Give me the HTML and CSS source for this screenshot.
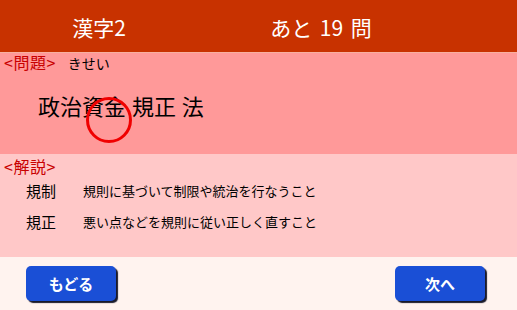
FILE: index.html
```html
<!DOCTYPE html>
<html lang="ja">
<head>
<meta charset="utf-8">
<link rel="stylesheet" href="styles.css">
</head>
<body>
<div class="app">
  <header class="header">
    <div class="title">漢字2</div>
    <div class="remain">あと 19 問</div>
  </header>
  <section class="question">
    <div class="qline"><span class="label">&lt;問題&gt;</span><span class="reading">きせい</span></div>
    <div class="qtext">政治資金 規正 法</div>
    <div class="mark"></div>
  </section>
  <section class="explain">
    <div class="label">&lt;解説&gt;</div>
    <div class="row"><span class="term">規制</span><span class="def">規則に基づいて制限や統治を行なうこと</span></div>
    <div class="row"><span class="term">規正</span><span class="def">悪い点などを規則に従い正しく直すこと</span></div>
  </section>
  <footer class="footer">
    <button class="btn">もどる</button>
    <button class="btn">次へ</button>
  </footer>
</div>
</body>
</html>
```
FILE: styles.css
```css
html, body {
  margin: 0;
  padding: 0;
}
body {
  width: 517px;
  height: 310px;
  overflow: hidden;
  font-family: "Noto Sans CJK JP", "Noto Sans", sans-serif;
  background: #fff3ef;
}
.app {
  display: flex;
  flex-direction: column;
  height: 310px;
}
.header {
  background: #c83200;
  border-bottom: 1px solid #f7b0a0;
  display: grid;
  grid-template-columns: 198px 246px;
  align-items: center;
  color: #fff;
  font-size: 21px;
  line-height: 26px;
  padding-top: 2px;
  box-sizing: border-box;
  height: 53px;
}
.title, .remain {
  text-align: center;
}
.remain {
  word-spacing: 3px;
}
.question {
  position: relative;
  height: 101px;
  background: #ff9999;
  box-sizing: border-box;
  padding-top: 0;
}
.qline {
  display: flex;
  align-items: baseline;
  line-height: 18px;
}
.label {
  color: #c80000;
  font-size: 16px;
  line-height: 18px;
  padding-left: 4px;
  letter-spacing: 0.5px;
}
.reading {
  font-size: 14px;
  margin-left: 12px;
  color: #000;
}
.qtext {
  margin-top: 19px;
  padding-left: 38px;
  font-size: 22px;
  line-height: 28px;
  word-spacing: 1px;
  color: #000;
}
.mark {
  position: absolute;
  left: 86px;
  top: 44px;
  width: 46px;
  height: 46px;
  box-sizing: border-box;
  border: 3.5px solid #f00000;
  border-radius: 50%;
}
.explain {
  height: 103px;
  background: #ffc8c8;
  box-sizing: border-box;
  padding-top: 3px;
}
.explain .label {
  display: block;
  line-height: 18px;
}
.row {
  display: flex;
  align-items: center;
  height: 31px;
  padding-left: 26px;
}
.term {
  width: 57px;
  font-size: 15px;
  color: #000;
}
.def {
  font-size: 13px;
  color: #000;
}
.footer {
  flex: 1;
  display: flex;
  justify-content: space-between;
  align-items: flex-start;
  padding: 9px 32px 0 26px;
}
.btn {
  width: 90px;
  height: 35px;
  border: none;
  border-radius: 5px;
  background: #1a4fd6;
  color: #fff;
  font-family: "Noto Sans CJK JP", "Noto Sans", sans-serif;
  font-size: 15px;
  font-weight: bold;
  box-shadow: 2px 2px 1px #1a1a2a;
  padding: 0;
}
```
